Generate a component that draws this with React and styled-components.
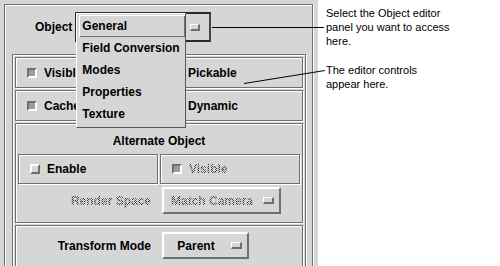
import React from 'react';
import styled, { createGlobalStyle, css } from 'styled-components';

const DARK = '#6f6f6f';
const BG = '#d6d6d6';

const GlobalStyle = createGlobalStyle`
  html, body {
    margin: 0;
    padding: 0;
    background: #fff;
  }
  body {
    font-family: "Liberation Sans", Arial, Helvetica, sans-serif;
  }
`;

const etched = css`
  box-sizing: border-box;
  border: 1px solid ${DARK};
  box-shadow: inset 1px 1px 0 #fff, 1px 1px 0 #fff;
`;

const stipple = css`
  color: transparent;
  background-image: repeating-conic-gradient(#2e2e2e 0 25%, transparent 0 50%);
  background-size: 2px 2px;
  -webkit-background-clip: text;
  background-clip: text;
`;

export default function App() {
  return (
    <>
      <GlobalStyle />
      <Page>
        <Panel>
          <OuterFrame>
            <ObjectRow>
              <Label>Object</Label>
              <OpenOption>
                <Indicator />
                <Popup>
                  <MenuItem $armed>General</MenuItem>
                  <MenuItem>Field Conversion</MenuItem>
                  <MenuItem>Modes</MenuItem>
                  <MenuItem>Properties</MenuItem>
                  <MenuItem>Texture</MenuItem>
                </Popup>
              </OpenOption>
            </ObjectRow>
            <InnerFrame>
              <ToggleRow>
                <Toggle>
                  <Check $checked />
                  <ToggleText>Visible</ToggleText>
                </Toggle>
                <Toggle>
                  <Check $checked />
                  <ToggleText>Pickable</ToggleText>
                </Toggle>
              </ToggleRow>
              <ToggleRow>
                <Toggle>
                  <Check $checked />
                  <ToggleText>Cached</ToggleText>
                </Toggle>
                <Toggle>
                  <Check $checked />
                  <ToggleText>Dynamic</ToggleText>
                </Toggle>
              </ToggleRow>
              <Group>
                <GroupTitle>Alternate Object</GroupTitle>
                <SubRow>
                  <SubBox>
                    <Toggle>
                      <Check />
                      <ToggleText>Enable</ToggleText>
                    </Toggle>
                  </SubBox>
                  <SubBox>
                    <Toggle>
                      <Check $checked />
                      <ToggleText $disabled>Visible</ToggleText>
                    </Toggle>
                  </SubBox>
                </SubRow>
                <FieldRow>
                  <FieldLabel $width={133} $disabled>
                    Render Space
                  </FieldLabel>
                  <OptionButton $width={119}>
                    <OptionText $disabled>Match Camera</OptionText>
                    <SmallIndicator />
                  </OptionButton>
                </FieldRow>
              </Group>
              <TransformBox>
                <FieldRow>
                  <FieldLabel $width={135}>Transform Mode</FieldLabel>
                  <OptionButton $width={87}>
                    <OptionText>Parent</OptionText>
                    <SmallIndicator />
                  </OptionButton>
                </FieldRow>
              </TransformBox>
            </InnerFrame>
          </OuterFrame>
        </Panel>
        <Notes>
          <Note>
            Select the Object editor
            <br />
            panel you want to access
            <br />
            here.
          </Note>
          <Note $gap={15}>
            The editor controls
            <br />
            appear here.
          </Note>
        </Notes>
        <Callouts width="500" height="266" viewBox="0 0 500 266">
          <line x1="212" y1="27.5" x2="324" y2="27.5" stroke="#000" strokeWidth="1" />
          <line x1="244" y1="83.5" x2="325" y2="70.5" stroke="#000" strokeWidth="1" />
        </Callouts>
      </Page>
    </>
  );
}

const Page = styled.div`
  position: relative;
  display: flex;
  width: 500px;
  height: 266px;
  overflow: hidden;
  background: #fff;
`;

const Panel = styled.div`
  box-sizing: border-box;
  width: 318px;
  height: 266px;
  padding: 4px 5px 0 4px;
  background: ${BG};
  overflow: hidden;
  flex-shrink: 0;
`;

const OuterFrame = styled.div`
  ${etched}
  display: flex;
  flex-direction: column;
  height: 300px;
`;

const ObjectRow = styled.div`
  display: flex;
  align-items: center;
  height: 30px;
  margin: 7px 0 12px;
  padding-left: 30px;
`;

const Label = styled.div`
  font-size: 12px;
  font-weight: 700;
  color: #000;
  margin-right: 3px;
`;

const OpenOption = styled.div`
  position: relative;
  box-sizing: border-box;
  width: 136px;
  height: 30px;
  border: 2px solid #2b2b2b;
  border-right-color: #444;
  display: flex;
  align-items: center;
  justify-content: flex-end;
  padding: 1px 9px 0 0;
  background: ${BG};
`;

const Indicator = styled.div`
  box-sizing: border-box;
  width: 10px;
  height: 7px;
  border-style: solid;
  border-width: 1px 2px 2px 1px;
  border-color: #fff ${DARK} ${DARK} #fff;
  background: ${BG};
`;

const Popup = styled.div`
  position: absolute;
  left: -1px;
  top: -1px;
  z-index: 2;
  box-sizing: border-box;
  width: 110px;
  padding: 1px 0 2px 2px;
  background: ${BG};
  border-style: solid;
  border-width: 1px;
  border-color: #fff #555 #555 #fff;
`;

const MenuItem = styled.div`
  box-sizing: border-box;
  height: 22px;
  display: flex;
  align-items: center;
  padding-left: 3px;
  font-size: 12px;
  font-weight: 700;
  color: #000;
  white-space: nowrap;
  ${props =>
    props.$armed &&
    css`
      box-shadow: inset 1px 1px 0 #fff, inset -1px -1px 0 ${DARK};
    `};
`;

const InnerFrame = styled.div`
  ${etched}
  flex: 1;
  margin: 0 6px 0 7px;
  padding: 2px;
  display: flex;
  flex-direction: column;
  gap: 2px;
`;

const ToggleRow = styled.div`
  ${etched}
  height: 31px;
  display: grid;
  grid-template-columns: 144px 1fr;
  align-items: center;
  padding-left: 11px;
  flex-shrink: 0;
`;

const Toggle = styled.div`
  display: flex;
  align-items: center;
  gap: 7px;
`;

const Check = styled.div`
  box-sizing: border-box;
  width: 10px;
  height: 10px;
  border-style: solid;
  border-width: 2px;
  ${props =>
    props.$checked
      ? css`
          border-color: ${DARK} #fff #fff ${DARK};
          background: #9c9c9c;
        `
      : css`
          border-color: #fff ${DARK} ${DARK} #fff;
          background: ${BG};
        `};
`;

const ToggleText = styled.span`
  font-size: 12px;
  font-weight: 700;
  color: #000;
  white-space: nowrap;
  ${props => props.$disabled && stipple};
`;

const Group = styled.div`
  ${etched}
  height: 100px;
  padding: 0 2px;
  display: flex;
  flex-direction: column;
  flex-shrink: 0;
`;

const GroupTitle = styled.div`
  box-sizing: border-box;
  height: 30px;
  padding-top: 3px;
  display: flex;
  align-items: center;
  justify-content: center;
  font-size: 12px;
  font-weight: 700;
  color: #000;
`;

const SubRow = styled.div`
  display: grid;
  grid-template-columns: 1fr 1fr;
  gap: 2px;
`;

const SubBox = styled.div`
  ${etched}
  height: 30px;
  display: flex;
  align-items: center;
  padding-left: 11px;
`;

const FieldRow = styled.div`
  display: flex;
  align-items: center;
  gap: 11px;
  margin-top: 3px;
`;

const FieldLabel = styled.div`
  width: ${props => props.$width}px;
  text-align: right;
  font-size: 12px;
  font-weight: 700;
  color: #000;
  white-space: nowrap;
  ${props => props.$disabled && stipple};
`;

const OptionButton = styled.div`
  box-sizing: border-box;
  width: ${props => props.$width}px;
  height: 27px;
  display: flex;
  align-items: center;
  padding: 0 5px 0 2px;
  border-style: solid;
  border-width: 2px;
  border-color: #fff ${DARK} ${DARK} #fff;
  background: ${BG};
`;

const OptionText = styled.span`
  flex: 1;
  text-align: center;
  margin-right: 5px;
  font-size: 12px;
  font-weight: 700;
  color: #000;
  white-space: nowrap;
  ${props => props.$disabled && stipple};
`;

const SmallIndicator = styled.div`
  box-sizing: border-box;
  width: 11px;
  height: 7px;
  border-style: solid;
  border-width: 1px 2px 2px 1px;
  border-color: #fff ${DARK} ${DARK} #fff;
  background: ${BG};
`;

const TransformBox = styled.div`
  ${etched}
  flex: 1;
  padding-top: 3px;
`;

const Notes = styled.div`
  flex: 1;
  padding: 6px 0 0 8px;
`;

const Note = styled.div`
  margin-top: ${props => props.$gap || 0}px;
  font-size: 11px;
  line-height: 14px;
  color: #000;
  white-space: nowrap;
`;

const Callouts = styled.svg`
  position: absolute;
  left: 0;
  top: 0;
  pointer-events: none;
`;
